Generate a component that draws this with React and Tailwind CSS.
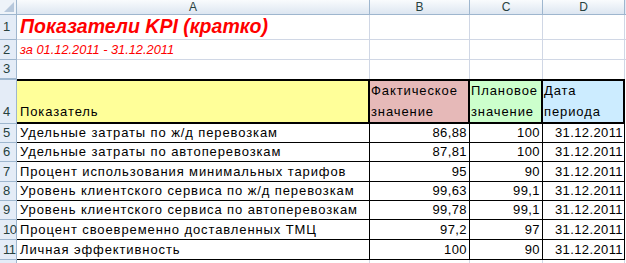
import React from 'react';

const font = { fontFamily: '"Liberation Sans", Arial, sans-serif' };

const rows = [
  { n: 5, h: 'h-[19px]', name: 'Удельные затраты по ж/д перевозкам', fact: '86,88', plan: '100' },
  { n: 6, h: 'h-[19px]', name: 'Удельные затраты по автоперевозкам', fact: '87,81', plan: '100' },
  { n: 7, h: 'h-[20px]', name: 'Процент использования минимальных тарифов', fact: '95', plan: '90' },
  { n: 8, h: 'h-[19px]', name: 'Уровень клиентского сервиса по ж/д перевозкам', fact: '99,63', plan: '99,1' },
  { n: 9, h: 'h-[19px]', name: 'Уровень клиентского сервиса по автоперевозкам', fact: '99,78', plan: '99,1' },
  { n: 10, h: 'h-[20px]', name: 'Процент своевременно доставленных ТМЦ', fact: '97,2', plan: '97' },
  { n: 11, h: 'h-[20px]', name: 'Личная эффективность', fact: '100', plan: '90' },
];

const RowHead = ({ n, className = '' }) => (
  <div className={`w-[17px] shrink-0 bg-[#e4ecf7] border-r border-b border-[#9eb6ce] flex items-center pl-[3px] text-[13px] text-[#27413e] ${className}`}>
    {n}
  </div>
);

const Grid = ({ w, children, className = '' }) => (
  <div className={`${w} shrink-0 border-r border-b border-[#d0d7e5] flex items-center ${className}`}>{children}</div>
);

export default function App() {
  return (
    <div className="w-[626px] h-[263px] overflow-hidden bg-white text-black" style={font}>
      {/* column letters */}
      <div className="flex h-[15px]">
        <div className="w-[17px] shrink-0 border-r border-b border-[#9eb6ce] bg-[#eef3f9] relative">
          <svg className="absolute right-[2px] bottom-[2px]" width="10" height="10" viewBox="0 0 10 10">
            <polygon points="10,0 10,10 0,10" fill="#b7c8dc" />
          </svg>
        </div>
        {[['A', 'w-[353px]'], ['B', 'w-[100px]'], ['C', 'w-[73px]'], ['D', 'w-[82px]']].map(([l, w]) => (
          <div key={l} className={`${w} shrink-0 border-r border-b border-[#9eb6ce] bg-gradient-to-b from-[#f9fbfd] to-[#dde6f1] flex items-center justify-center text-[12px] text-[#27413e]`}>
            {l}
          </div>
        ))}
        <div className="flex-1 border-b border-[#9eb6ce] bg-[#e4ecf7]" />
      </div>

      {/* row 1 */}
      <div className="flex h-[25px]">
        <RowHead n={1} />
        <Grid w="w-[353px]" className="pl-[3px] overflow-visible whitespace-nowrap">
          <span className="text-[19.5px] font-bold italic text-[#ff0000]">Показатели KPI (кратко)</span>
        </Grid>
        <Grid w="w-[100px]" />
        <Grid w="w-[73px]" />
        <Grid w="w-[82px]" />
        <div className="flex-1 border-b border-[#d0d7e5]" />
      </div>

      {/* row 2 */}
      <div className="flex h-[20px]">
        <RowHead n={2} />
        <Grid w="w-[353px]" className="pl-[3px]">
          <span className="text-[12.8px] italic text-[#ff0000]">за 01.12.2011 - 31.12.2011</span>
        </Grid>
        <Grid w="w-[100px]" />
        <Grid w="w-[73px]" />
        <Grid w="w-[82px]" />
        <div className="flex-1 border-b border-[#d0d7e5]" />
      </div>

      {/* row 3 */}
      <div className="flex h-[19px]">
        <RowHead n={3} />
        <div className="w-[353px] shrink-0 border-r border-[#d0d7e5]" />
        <div className="w-[100px] shrink-0 border-r border-[#d0d7e5]" />
        <div className="w-[73px] shrink-0 border-r border-[#d0d7e5]" />
        <div className="w-[82px] shrink-0 border-r border-[#d0d7e5]" />
        <div className="flex-1" />
      </div>

      {/* row 4: table header */}
      <div className="flex h-[45px] text-[13px] leading-[15px] tracking-[0.9px]">
        <RowHead n={4} className="items-end pb-[4px] border-t border-t-[#9eb6ce] tracking-normal" />
        <div className="w-[353px] shrink-0 bg-[#ffff99] border-y-2 border-r-2 border-black flex items-end pl-[3px] pb-[3px]">
          Показатель
        </div>
        <div className="w-[100px] shrink-0 bg-[#e6b9b8] border-y-2 border-r-2 border-black flex flex-col justify-between pl-[1px] pt-[2px] pb-[3px] whitespace-nowrap">
          <span>Фактическое</span>
          <span>значение</span>
        </div>
        <div className="w-[73px] shrink-0 bg-[#ccffcc] border-y-2 border-r-2 border-black flex flex-col justify-between pl-[1px] pt-[2px] pb-[3px] whitespace-nowrap overflow-hidden">
          <span>Плановое</span>
          <span>значение</span>
        </div>
        <div className="w-[82px] shrink-0 bg-[#ccecff] border-y-2 border-r-2 border-black flex flex-col justify-between pl-[1px] pt-[2px] pb-[3px]">
          <span>Дата</span>
          <span>периода</span>
        </div>
        <div className="flex-1" />
      </div>

      {/* rows 5..11 */}
      {rows.map(r => (
        <div key={r.n} className={`flex ${r.h} text-[13px]`}>
          <RowHead n={r.n} className={r.n >= 10 ? 'pl-0 tracking-[-0.5px]' : ''} />
          <div className="w-[353px] shrink-0 border-r border-b border-black flex items-center pl-[3px] whitespace-nowrap overflow-hidden tracking-[0.9px]">{r.name}</div>
          <div className="w-[100px] shrink-0 border-r border-b border-black flex items-center justify-end pr-[2px] tracking-[0.4px]">{r.fact}</div>
          <div className="w-[73px] shrink-0 border-r border-b border-black flex items-center justify-end pr-[2px] tracking-[0.4px]">{r.plan}</div>
          <div className="w-[82px] shrink-0 border-r border-b border-black flex items-center justify-end pr-[1px] tracking-[0.4px]">31.12.2011</div>
          <div className="flex-1" />
        </div>
      ))}

      {/* row 12 (cut off) */}
      <div className="flex h-[4px]">
        <div className="w-[17px] shrink-0 bg-[#e4ecf7] border-r border-[#9eb6ce]" />
        <div className="w-[353px] shrink-0 border-r border-[#d0d7e5]" />
        <div className="w-[100px] shrink-0 border-r border-[#d0d7e5]" />
        <div className="w-[73px] shrink-0 border-r border-[#d0d7e5]" />
        <div className="w-[82px] shrink-0 border-r border-[#d0d7e5]" />
      </div>
    </div>
  );
}
